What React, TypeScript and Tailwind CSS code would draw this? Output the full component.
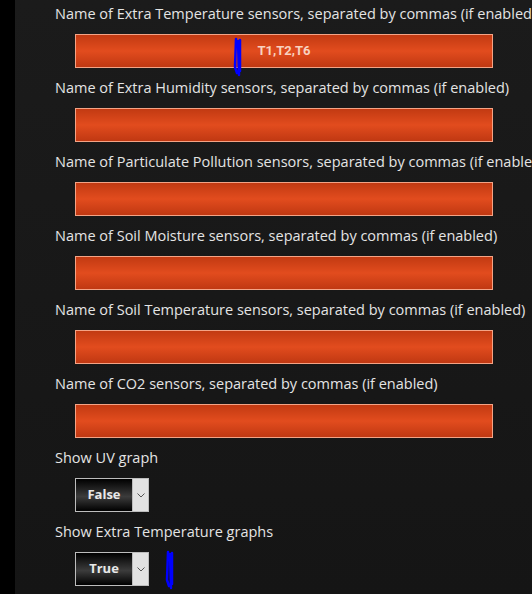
import React from 'react'

const textFields = [
  { label: 'Name of Extra Temperature sensors, separated by commas (if enabled)', value: 'T1,T2,T6', mark: true },
  { label: 'Name of Extra Humidity sensors, separated by commas (if enabled)', value: '' },
  { label: 'Name of Particulate Pollution sensors, separated by commas (if enabled)', value: '' },
  { label: 'Name of Soil Moisture sensors, separated by commas (if enabled)', value: '' },
  { label: 'Name of Soil Temperature sensors, separated by commas (if enabled)', value: '' },
  { label: 'Name of CO2 sensors, separated by commas (if enabled)', value: '' },
]

const selects = [
  { label: 'Show UV graph', value: 'False' },
  { label: 'Show Extra Temperature graphs', value: 'True', mark: true },
]

const Scribble = ({ className }: { className: string }) => (
  <svg className={className} width="12" height="40" viewBox="0 0 12 40" fill="none">
    <path d="M4 2 L3 30 L5 36 M6 4 L7 38 M8 3 L8 34" stroke="#0000ff" strokeWidth="2.5" strokeLinecap="round" />
  </svg>
)

const App = () => {
  return (
    <div className="flex h-[594px] w-[532px] overflow-hidden bg-black font-['Open_Sans',sans-serif]">
      <div className="w-[15px] shrink-0 bg-black" />
      <div className="flex-1 bg-gradient-to-b from-[#1b1b1b] to-[#151515] pl-[40px] pt-[4px]">
        {textFields.map((f) => (
          <div key={f.label} className="mb-[10px]">
            <div className="h-[22px] whitespace-nowrap text-[14.5px] leading-[20px] text-[#e4e4e4]">{f.label}</div>
            <div className="relative ml-[20px] mt-[8px] flex h-[34px] w-[418px] items-center justify-center border border-[#f4a385] bg-[linear-gradient(to_bottom,#c23a12,#e24c1e_50%,#c03812)] font-['Roboto',sans-serif] text-[13px] font-bold text-[#f8d2c0]">
              {f.value}
              {f.mark && <Scribble className="absolute left-[156px] top-[2px]" />}
            </div>
          </div>
        ))}
        {selects.map((s) => (
          <div key={s.label} className="mb-[10px]">
            <div className="h-[22px] whitespace-nowrap text-[14.5px] leading-[20px] text-[#e4e4e4]">{s.label}</div>
            <div className="relative ml-[20px] mt-[8px] flex h-[34px] w-[74px] border border-[#bdbdbd]">
              <div className="flex flex-1 items-center justify-center bg-[linear-gradient(to_bottom,#000,#3c3c3c_55%,#000)] text-[13px] font-bold text-[#e8e8e8]">
                {s.value}
              </div>
              <div className="flex w-[16px] items-center justify-center border-l border-[#bdbdbd] bg-[#e2e2e2]">
                <svg width="8" height="5" viewBox="0 0 8 5" fill="none">
                  <path d="M0.5 0.5 L4 4 L7.5 0.5" stroke="#555" strokeWidth="1" />
                </svg>
              </div>
              {s.mark && <Scribble className="absolute left-[88px] top-[-3px]" />}
            </div>
          </div>
        ))}
      </div>
    </div>
  )
}

export default App
